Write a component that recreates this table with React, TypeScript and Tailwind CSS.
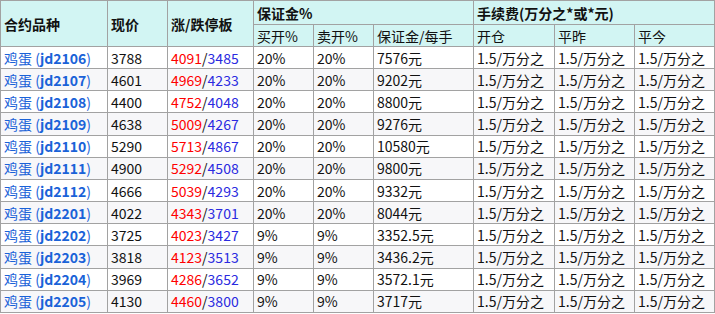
import React from "react";

const rows: [string, string, string, string, string, string][] = [
  ["jd2106", "3788", "4091", "3485", "20%", "7576元"],
  ["jd2107", "4601", "4969", "4233", "20%", "9202元"],
  ["jd2108", "4400", "4752", "4048", "20%", "8800元"],
  ["jd2109", "4638", "5009", "4267", "20%", "9276元"],
  ["jd2110", "5290", "5713", "4867", "20%", "10580元"],
  ["jd2111", "4900", "5292", "4508", "20%", "9800元"],
  ["jd2112", "4666", "5039", "4293", "20%", "9332元"],
  ["jd2201", "4022", "4343", "3701", "20%", "8044元"],
  ["jd2202", "3725", "4023", "3427", "9%", "3352.5元"],
  ["jd2203", "3818", "4123", "3513", "9%", "3436.2元"],
  ["jd2204", "3969", "4286", "3652", "9%", "3572.1元"],
  ["jd2205", "4130", "4460", "3800", "9%", "3717元"],
];

const cell = "border border-[#a2a2a2] px-[3px] text-left align-middle";

export default function App() {
  return (
    <div
      className="w-[715px] h-[314px] bg-white overflow-hidden text-[14px] text-[#111]"
      style={{ fontFamily: '"Noto Sans CJK SC", "Liberation Sans", sans-serif' }}
    >
      <table className="table-fixed border-collapse w-[714px] leading-[18px]">
        <colgroup>
          <col className="w-[107px]" />
          <col className="w-[60px]" />
          <col className="w-[86px]" />
          <col className="w-[60px]" />
          <col className="w-[60px]" />
          <col className="w-[100px]" />
          <col className="w-[81px]" />
          <col className="w-[80px]" />
          <col className="w-[80px]" />
        </colgroup>
        <thead className="bg-[#d2f5f3]">
          <tr className="h-[24px]">
            <th rowSpan={2} className={`${cell} font-bold`}>合约品种</th>
            <th rowSpan={2} className={`${cell} font-bold`}>现价</th>
            <th rowSpan={2} className={`${cell} font-bold`}>涨/跌停板</th>
            <th colSpan={3} className={`${cell} font-bold`}>保证金%</th>
            <th colSpan={3} className={`${cell} font-bold`}>手续费(万分之*或*元)</th>
          </tr>
          <tr className="h-[22px]">
            <th className={`${cell} font-normal`}>买开%</th>
            <th className={`${cell} font-normal`}>卖开%</th>
            <th className={`${cell} font-normal`}>保证金/每手</th>
            <th className={`${cell} font-normal`}>开仓</th>
            <th className={`${cell} font-normal`}>平昨</th>
            <th className={`${cell} font-normal`}>平今</th>
          </tr>
        </thead>
        <tbody>
          {rows.map((r, i) => (
            <tr key={r[0]} className={`h-[22.17px] ${i % 2 === 1 ? "bg-[#f7f7f9]" : "bg-white"}`}>
              <td className={`${cell} text-[#1a62d8]`}>
                鸡蛋 (<span className="font-bold">{r[0]}</span>)
              </td>
              <td className={cell}>{r[1]}</td>
              <td className={cell}>
                <span className="text-[#ff0000]">{r[2]}</span>/<span className="text-[#2a2ae0]">{r[3]}</span>
              </td>
              <td className={cell}>{r[4]}</td>
              <td className={cell}>{r[4]}</td>
              <td className={cell}>{r[5]}</td>
              <td className={cell}>1.5/万分之</td>
              <td className={cell}>1.5/万分之</td>
              <td className={cell}>1.5/万分之</td>
            </tr>
          ))}
        </tbody>
      </table>
    </div>
  );
}
